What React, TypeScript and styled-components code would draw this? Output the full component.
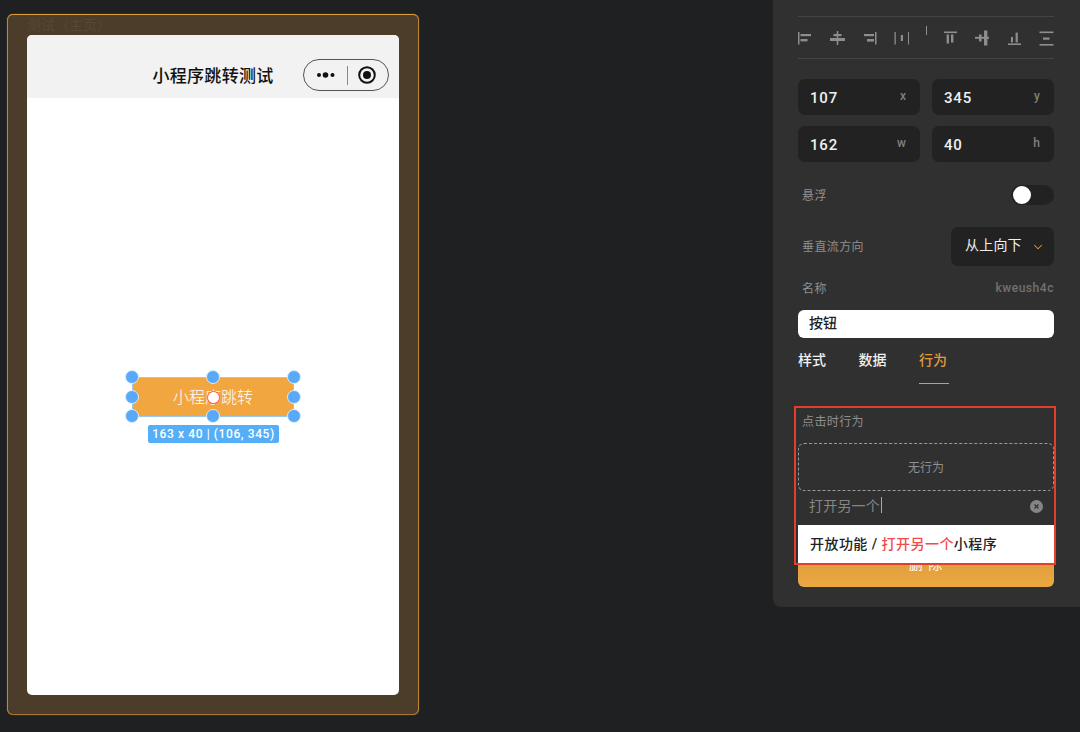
import React from 'react';
import styled, { createGlobalStyle } from 'styled-components';
import { ChevronDown } from 'lucide-react';

const GlobalStyle = createGlobalStyle`
    html, body {
        margin: 0;
        height: 100%;
        background: #1f2021;
        overflow: hidden;
    }
    body {
        font-family: Roboto, "Noto Sans CJK SC", sans-serif;
    }
`;

const Root = styled.div`
    display: flex;
    justify-content: space-between;
    align-items: flex-start;
    width: 1080px;
    height: 732px;
`;

const Canvas = styled.div`
    padding: 14px 0 0 7px;
`;

const Frame = styled.div`
    box-sizing: border-box;
    width: 412px;
    height: 701px;
    padding: 0 19px;
    background: #4b3d2a;
    border: 1px solid #bd8732;
    border-top-color: #dc9e3c;
    border-bottom-color: #a9762f;
    border-radius: 6px;
    box-shadow: 0 0 1px #bd8732;
`;

const FrameTitle = styled.div`
    height: 20px;
    line-height: 20px;
    font-size: 14px;
    color: #57482f;
    white-space: nowrap;
`;

const Phone = styled.div`
    position: relative;
    width: 372px;
    height: 660px;
    background: #fff;
    border-radius: 5px;
    overflow: hidden;
`;

const PhoneHeader = styled.div`
    box-sizing: border-box;
    display: grid;
    grid-template-columns: 1fr auto 1fr;
    align-items: center;
    height: 63px;
    padding: 24px 10px 7px;
    background: #f2f2f2;
`;

const PhoneTitle = styled.div`
    grid-column: 2;
    padding-bottom: 2px;
    font-size: 17px;
    font-weight: 500;
    letter-spacing: 0.3px;
    color: #111;
    white-space: nowrap;
`;

const Capsule = styled.div`
    box-sizing: border-box;
    justify-self: end;
    display: flex;
    align-items: center;
    width: 86px;
    height: 32px;
    padding-left: 12px;
    border: 1px solid #555;
    border-radius: 16px;
`;

const CapsuleDivider = styled.div`
    width: 1px;
    height: 19px;
    margin: 0 10px 0 11px;
    background: #888;
`;

const SelectedButton = styled.div`
    position: absolute;
    left: 105px;
    top: 342px;
    box-sizing: border-box;
    display: flex;
    align-items: center;
    justify-content: center;
    width: 162px;
    height: 40px;
    padding-bottom: 2px;
    background: #f2a63f;
    box-shadow: inset 0 0 0 1px #9cc8ee;
    color: #fff;
    font-size: 16px;
    font-weight: 300;
`;

const Handle = styled.div<{ $x: number; $y: number }>`
    position: absolute;
    left: ${(p) => p.$x}%;
    top: ${(p) => p.$y}%;
    box-sizing: border-box;
    width: 14px;
    height: 14px;
    margin: -7px 0 0 -7px;
    background: #5aa9f8;
    border: 1px solid #dcecfb;
    border-radius: 50%;
`;

const CenterDot = styled.div`
    position: absolute;
    left: 50%;
    top: 50%;
    box-sizing: border-box;
    width: 13px;
    height: 13px;
    margin: -6px 0 0 -6px;
    background: #fff;
    border: 1px solid #ee5a4b;
    border-radius: 50%;
`;

const SizeTag = styled.div`
    position: absolute;
    left: 16px;
    top: 48px;
    width: 131px;
    height: 18px;
    line-height: 18px;
    text-align: center;
    background: #55aef8;
    border-radius: 2px;
    color: #fff;
    font-size: 12px;
    font-weight: 500;
    letter-spacing: 0.6px;
    white-space: nowrap;
`;

const Panel = styled.div`
    box-sizing: border-box;
    width: 307px;
    height: 607px;
    padding: 16px 26px 20px 25px;
    background: #303030;
    border-bottom-left-radius: 8px;
`;

const AlignBar = styled.div`
    display: flex;
    align-items: center;
    justify-content: space-between;
    height: 41px;
    border-top: 1px solid #444;
    border-bottom: 1px solid #444;
`;

const AlignIcon = styled.svg`
    display: block;
    width: 15px;
    height: 16px;
    fill: #8d8d8d;
`;

const AlignTick = styled.div`
    width: 1px;
    height: 9px;
    margin-top: -15px;
    background: #8d8d8d;
`;

const GeometryGrid = styled.div`
    display: grid;
    grid-template-columns: 122px 122px;
    justify-content: space-between;
    row-gap: 11px;
    margin-top: 20px;
`;

const GeometryField = styled.div`
    box-sizing: border-box;
    display: flex;
    align-items: center;
    justify-content: space-between;
    height: 36px;
    padding: 2px 14px 0 12px;
    background: #222;
    border-radius: 7px;
    color: #f0f0f0;
    font-size: 15px;
    font-weight: 500;
    letter-spacing: 0.8px;
`;

const GeometryUnit = styled.span`
    margin-top: -5px;
    color: #808080;
    font-size: 12px;
    letter-spacing: 0;
`;

const FormRow = styled.div<{ $top: number; $height: number }>`
    display: flex;
    align-items: center;
    justify-content: space-between;
    height: ${(p) => p.$height}px;
    margin-top: ${(p) => p.$top}px;
    padding-left: 4px;
`;

const Label = styled.span`
    padding-bottom: 2px;
    color: #8f8f8f;
    font-size: 12px;
    letter-spacing: 0.4px;
`;

const ElementKey = styled.span`
    color: #707070;
    font-size: 12px;
    font-weight: 500;
    letter-spacing: 0.55px;
`;

const Toggle = styled.div`
    box-sizing: border-box;
    display: flex;
    align-items: center;
    width: 43px;
    height: 20px;
    padding-left: 2px;
    background: #222;
    border-radius: 10px;
`;

const ToggleKnob = styled.div`
    width: 18px;
    height: 18px;
    background: #fff;
    border-radius: 50%;
`;

const Select = styled.div`
    box-sizing: border-box;
    display: flex;
    align-items: center;
    justify-content: space-between;
    width: 103px;
    height: 39px;
    padding: 0 9px 0 14px;
    background: #222;
    border-radius: 7px;
    color: #eee;
    font-size: 14px;
    letter-spacing: 0.2px;
    svg {
        color: #e09a3a;
    }
`;

const SelectText = styled.span`
    padding-bottom: 6px;
`;

const NameInput = styled.div`
    height: 28px;
    line-height: 26px;
    margin-top: 14px;
    padding-left: 11px;
    background: #fff;
    border-radius: 6px;
    color: #222;
    font-size: 14px;
    font-weight: 500;
`;

const Tabs = styled.div`
    display: flex;
    gap: 30.5px;
    margin-top: 11px;
`;

const Tab = styled.div<{ $active?: boolean }>`
    width: 30px;
    height: 22px;
    line-height: 22px;
    padding-bottom: 12px;
    border-bottom: 1px solid ${(p) => (p.$active ? '#e09a3a' : 'transparent')};
    color: ${(p) => (p.$active ? '#e09a3a' : '#f0f0f0')};
    font-size: 14px;
    font-weight: 500;
    white-space: nowrap;
`;

const Behavior = styled.div`
    position: relative;
    margin-top: 29px;
`;

const BehaviorLabel = styled.div`
    height: 16px;
    line-height: 18px;
    padding-left: 4px;
    color: #8f8f8f;
    font-size: 12px;
    letter-spacing: 0.4px;
`;

const DropZone = styled.div`
    box-sizing: border-box;
    display: flex;
    align-items: center;
    justify-content: center;
    height: 48px;
    margin-top: 14px;
    padding-bottom: 2px;
    border: 1px dashed #999;
    border-radius: 6px;
    color: #8f8f8f;
    font-size: 12px;
`;

const SearchRow = styled.div`
    box-sizing: border-box;
    display: flex;
    align-items: center;
    justify-content: space-between;
    height: 34px;
    padding: 0 11px 4px;
    color: #868686;
    font-size: 14px;
    letter-spacing: 0.2px;
`;

const SearchText = styled.span`
    display: flex;
    align-items: center;
    padding-bottom: 2px;
`;

const Caret = styled.span`
    width: 1px;
    height: 16px;
    margin-left: 1px;
    background: #aaa;
`;

const DeleteButton = styled.div`
    box-sizing: border-box;
    display: flex;
    align-items: center;
    justify-content: center;
    height: 44px;
    margin-top: 18px;
    padding-bottom: 4px;
    background: linear-gradient(#d6963c, #eda840);
    border-radius: 6px;
    color: #fff;
    font-size: 14px;
    letter-spacing: 1px;
    white-space: pre;
`;

const SearchResult = styled.div`
    position: absolute;
    left: 0;
    right: 0;
    top: 112px;
    height: 39px;
    line-height: 39px;
    padding-left: 12px;
    background: #fff;
    color: #222;
    font-size: 14px;
    font-weight: 500;
    letter-spacing: 0.45px;
    white-space: nowrap;
`;

const Highlight = styled.span`
    color: #f04b4b;
`;

const Annotation = styled.div`
    position: absolute;
    left: -4px;
    right: -2px;
    top: -7px;
    height: 159px;
    box-sizing: border-box;
    border: 2px solid #e33e2b;
`;

const alignIcons = [
    <>
        <rect x="0" y="2" width="1.5" height="12.5" />
        <rect x="2.5" y="4" width="10.5" height="2.2" />
        <rect x="2.5" y="9" width="7" height="2.4" />
    </>,
    <>
        <rect x="6.7" y="1" width="1.6" height="14" />
        <rect x="3.5" y="4" width="8" height="2.2" />
        <rect x="0" y="8" width="15" height="3" />
    </>,
    <>
        <rect x="13" y="2" width="1.5" height="12.5" />
        <rect x="2" y="4" width="10" height="2.2" />
        <rect x="5" y="9" width="7" height="2.6" />
    </>,
    <>
        <rect x="0.5" y="2" width="1.3" height="12.5" />
        <rect x="14" y="2" width="1.3" height="12.5" />
        <rect x="6.8" y="5" width="2.2" height="6" />
    </>,
    <>
        <rect x="1" y="1.5" width="13" height="1.6" />
        <rect x="3.6" y="4.5" width="2.4" height="9" />
        <rect x="8" y="4.5" width="2.4" height="8" />
    </>,
    <>
        <rect x="9" y="0.5" width="3.4" height="15" />
        <rect x="0" y="6.8" width="14" height="2" />
        <rect x="4" y="4.5" width="2.5" height="7" />
    </>,
    <>
        <rect x="1" y="13.4" width="13" height="1.6" />
        <rect x="4" y="7" width="2" height="5.4" />
        <rect x="8.6" y="2.6" width="2.2" height="9.8" />
    </>,
    <>
        <rect x="0.5" y="1.5" width="14" height="1.6" />
        <rect x="0.5" y="14" width="14" height="1.6" />
        <rect x="4" y="7.5" width="6.5" height="2.2" />
    </>,
];

const handles = [
    [0, 0],
    [50, 0],
    [100, 0],
    [0, 50],
    [100, 50],
    [0, 97.5],
    [50, 97.5],
    [100, 97.5],
];

const geometry = [
    ['107', 'x'],
    ['345', 'y'],
    ['162', 'w'],
    ['40', 'h'],
];

function DotsIcon() {
    return (
        <svg width="20" height="8" viewBox="0 0 20 8" fill="#111">
            <circle cx="3" cy="4" r="2" />
            <circle cx="9.5" cy="4" r="2.8" />
            <circle cx="16.5" cy="4" r="2" />
        </svg>
    );
}

function RecordIcon() {
    return (
        <svg width="18" height="18" viewBox="0 0 18 18">
            <circle cx="9" cy="9" r="7.8" fill="none" stroke="#111" strokeWidth="2" />
            <circle cx="9" cy="9" r="4" fill="#111" />
        </svg>
    );
}

function ClearIcon() {
    return (
        <svg width="13" height="13" viewBox="0 0 13 13">
            <circle cx="6.5" cy="6.5" r="6.5" fill="#858585" />
            <path d="M4.5 4.5l4 4M8.5 4.5l-4 4" stroke="#333" strokeWidth="1.2" />
        </svg>
    );
}

export default function App() {
    return (
        <Root>
            <GlobalStyle />
            <Canvas>
                <Frame>
                    <FrameTitle>测试（主页）</FrameTitle>
                    <Phone>
                        <PhoneHeader>
                            <PhoneTitle>小程序跳转测试</PhoneTitle>
                            <Capsule>
                                <DotsIcon />
                                <CapsuleDivider />
                                <RecordIcon />
                            </Capsule>
                        </PhoneHeader>
                        <SelectedButton>
                            小程序跳转
                            {handles.map(([x, y]) => (
                                <Handle key={`${x}-${y}`} $x={x} $y={y} />
                            ))}
                            <CenterDot />
                            <SizeTag>163 x 40 | (106, 345)</SizeTag>
                        </SelectedButton>
                    </Phone>
                </Frame>
            </Canvas>
            <Panel>
                <AlignBar>
                    {alignIcons.slice(0, 4).map((icon, i) => (
                        <AlignIcon key={i} viewBox="0 0 15 16">
                            {icon}
                        </AlignIcon>
                    ))}
                    <AlignTick />
                    {alignIcons.slice(4).map((icon, i) => (
                        <AlignIcon key={i} viewBox="0 0 15 16">
                            {icon}
                        </AlignIcon>
                    ))}
                </AlignBar>
                <GeometryGrid>
                    {geometry.map(([value, unit]) => (
                        <GeometryField key={unit}>
                            {value}
                            <GeometryUnit>{unit}</GeometryUnit>
                        </GeometryField>
                    ))}
                </GeometryGrid>
                <FormRow $top={23} $height={20}>
                    <Label>悬浮</Label>
                    <Toggle>
                        <ToggleKnob />
                    </Toggle>
                </FormRow>
                <FormRow $top={22} $height={39}>
                    <Label>垂直流方向</Label>
                    <Select>
                        <SelectText>从上向下</SelectText>
                        <ChevronDown size={14} strokeWidth={1.75} />
                    </Select>
                </FormRow>
                <FormRow $top={14} $height={16}>
                    <Label>名称</Label>
                    <ElementKey>kweush4c</ElementKey>
                </FormRow>
                <NameInput>按钮</NameInput>
                <Tabs>
                    <Tab>样式</Tab>
                    <Tab>数据</Tab>
                    <Tab $active>行为</Tab>
                </Tabs>
                <Behavior>
                    <BehaviorLabel>点击时行为</BehaviorLabel>
                    <DropZone>无行为</DropZone>
                    <SearchRow>
                        <SearchText>
                            打开另一个
                            <Caret />
                        </SearchText>
                        <ClearIcon />
                    </SearchRow>
                    <DeleteButton>删 除</DeleteButton>
                    <SearchResult>
                        开放功能 / <Highlight>打开另一个</Highlight>小程序
                    </SearchResult>
                    <Annotation />
                </Behavior>
            </Panel>
        </Root>
    );
}
